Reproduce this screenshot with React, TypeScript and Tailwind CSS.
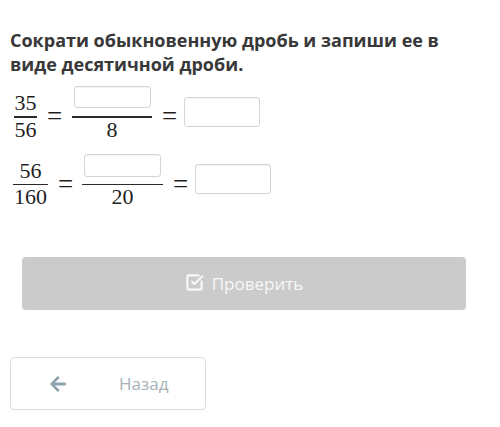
import React from 'react';
import { SquareCheckBig } from 'lucide-react';
import { FaArrowLeft } from 'react-icons/fa';

const serif = { fontFamily: '"Liberation Serif", "Times New Roman", serif' };

const AnswerBox: React.FC<{ className?: string }> = ({ className }) => (
  <div className={`border border-[#d4d4d4] rounded-[3px] bg-white shadow-[inset_0_1px_1px_rgba(0,0,0,0.04)] ${className ?? ''}`} />
);

const Fraction: React.FC<{ top: React.ReactNode; bottom: string; width: number }> = ({ top, bottom, width }) => (
  <div className="flex flex-col items-center" style={{ width }}>
    <div className="h-[30px] w-full flex items-end justify-center pb-[1px] text-[22px] leading-[24px]">{top}</div>
    <div className="h-[1.5px] w-full bg-[#2a2a2a]" />
    <div className="h-[24px] text-[22px] leading-[24px]">{bottom}</div>
  </div>
);

const Eq: React.FC<{ className?: string }> = ({ className }) => (
  <span className={`w-[15px] text-center text-[27px] leading-[24px] mt-[18px] ${className ?? ''}`}>=</span>
);

export default function App() {
  return (
    <div className="w-[500px] h-[427px] bg-white overflow-hidden" style={{ fontFamily: '"Open Sans", "Noto Sans", sans-serif' }}>
      <h1 className="px-[10px] pt-[28px] text-[18px] leading-[24px] font-bold text-[#383838]">
        Сократи обыкновенную дробь и запиши ее в виде десятичной дроби.
      </h1>

      <div className="text-[#1f1f1f]" style={serif}>
        <div className="flex items-start mt-[10px] pl-[14px]">
          <Fraction top="35" bottom="56" width={23} />
          <Eq className="ml-[10px]" />
          <div className="ml-[10px]">
            <Fraction top={<AnswerBox className="w-[77px] h-[22px] mb-[7px]" />} bottom="8" width={80} />
          </div>
          <Eq className="ml-[10px]" />
          <AnswerBox className="ml-[7px] mt-[11px] w-[76px] h-[30px]" />
        </div>

        <div className="flex items-start mt-[12px] pl-[13px]">
          <Fraction top="56" bottom="160" width={35} />
          <Eq className="ml-[10px]" />
          <div className="ml-[9px]">
            <Fraction top={<AnswerBox className="w-[77px] h-[23px] mb-[6px]" />} bottom="20" width={81} />
          </div>
          <Eq className="ml-[10px]" />
          <AnswerBox className="ml-[7px] mt-[10px] w-[76px] h-[30px]" />
        </div>
      </div>

      <div className="mt-[48px] px-[22px]">
        <button className="w-[444px] h-[53px] rounded-[4px] bg-[#cbcbcb] flex items-center justify-center gap-[8px] text-[#f7f7f7] text-[17px]">
          <SquareCheckBig size={19} strokeWidth={2.8} className="-mt-[2px]" />
          <span>Проверить</span>
        </button>
      </div>

      <div className="mt-[47px] px-[10px]">
        <button className="w-[196px] h-[53px] rounded-[4px] border border-[#dcdcdc] bg-white flex items-center">
          <FaArrowLeft className="ml-[38px] text-[#8ea2ae]" size={18} />
          <span className="ml-[52px] text-[17px] text-[#a6b1b9]">Назад</span>
        </button>
      </div>
    </div>
  );
}
